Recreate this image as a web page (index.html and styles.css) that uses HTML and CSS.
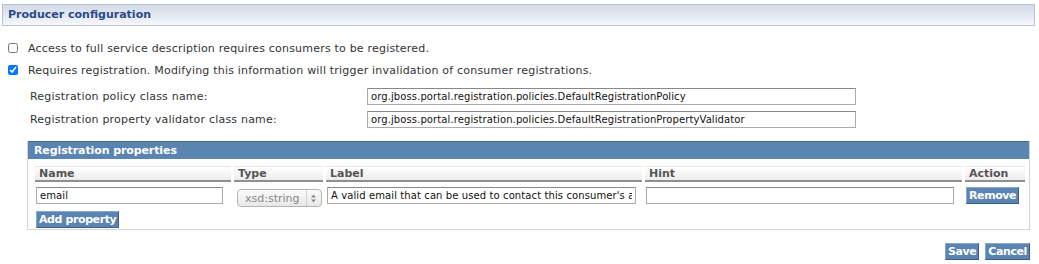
FILE: index.html
```html
<!DOCTYPE html>
<html lang="en">
<head>
    <meta charset="UTF-8">
    <title>Producer configuration</title>
    <link rel="stylesheet" href="styles.css">
</head>
<body>
    <div class="section-title">Producer configuration</div>

    <div class="options">
        <label class="check-row">
            <input type="checkbox">
            <span>Access to full service description requires consumers to be registered.</span>
        </label>
        <label class="check-row">
            <input type="checkbox" checked>
            <span>Requires registration. Modifying this information will trigger invalidation of consumer registrations.</span>
        </label>
    </div>

    <div class="field-grid">
        <label for="policy">Registration policy class name:</label>
        <input type="text" id="policy" class="text-field" value="org.jboss.portal.registration.policies.DefaultRegistrationPolicy">
        <label for="validator">Registration property validator class name:</label>
        <input type="text" id="validator" class="text-field" value="org.jboss.portal.registration.policies.DefaultRegistrationPropertyValidator">
    </div>

    <div class="props-box">
        <div class="props-title">Registration properties</div>
        <table class="props-table">
            <thead>
                <tr>
                    <th class="col-name">Name</th>
                    <th class="col-type">Type</th>
                    <th class="col-label">Label</th>
                    <th class="col-hint">Hint</th>
                    <th class="col-action">Action</th>
                </tr>
            </thead>
            <tbody>
                <tr>
                    <td><input type="text" class="cell-input name-input" value="email"></td>
                    <td>
                        <div class="fake-select">
                            <span>xsd:string</span>
                            <span class="arrows">
                                <svg width="7" height="11" viewBox="0 0 7 11"><path d="M1 4.5 L3.5 1.5 L6 4.5 Z M1 6.5 L3.5 9.5 L6 6.5 Z" fill="#8a8a8a"/></svg>
                            </span>
                        </div>
                    </td>
                    <td><input type="text" class="cell-input label-input" value="A valid email that can be used to contact this consumer's administrator"></td>
                    <td><input type="text" class="cell-input hint-input" value=""></td>
                    <td><button class="btn">Remove</button></td>
                </tr>
            </tbody>
        </table>
        <div class="add-row">
            <button class="btn">Add property</button>
        </div>
    </div>

    <div class="actions">
        <button class="btn">Save</button>
        <button class="btn">Cancel</button>
    </div>
</body>
</html>
```

FILE: styles.css
```css
* {
    box-sizing: border-box;
}

body {
    margin: 0;
    padding: 4px 4px 0 2px;
    font-family: 'DejaVu Sans', Verdana, sans-serif;
    font-size: 11px;
    letter-spacing: 0.2px;
    color: #333;
    background: white;
}

.section-title {
    height: 22px;
    line-height: 20px;
    padding-left: 5px;
    border: 1px solid #b5c4d8;
    background: linear-gradient(#d2dae8, #f5f7fb);
    color: #2c4a88;
    font-weight: bold;
    font-size: 11px;
    letter-spacing: 0;
}

.options {
    padding: 11px 0 0 6px;
}

.check-row {
    display: flex;
    align-items: center;
    height: 22px;
}

.check-row input {
    margin: 0 10px 0 0;
    width: 10px;
    height: 10px;
}

.field-grid {
    display: grid;
    grid-template-columns: 337px 489px;
    row-gap: 6px;
    align-items: center;
    padding: 7px 0 0 28px;
}

.field-grid label {
    color: #333;
}

.text-field {
    height: 17px;
    padding: 0 3px;
    border: 1px solid #aaa;
    border-top-color: #888;
    font-family: inherit;
    font-size: 10px;
    letter-spacing: 0.1px;
    color: #111;
}

.props-box {
    margin: 13px 5px 0 25px;
    border: 1px solid #d4d4d4;
    border-top: none;
    padding-bottom: 1px;
}

.props-title {
    height: 18px;
    line-height: 18px;
    padding-left: 6px;
    background: #5a84b1;
    border-top: 1px solid #47668e;
    color: white;
    font-weight: bold;
    letter-spacing: -0.1px;
}

.props-table {
    border-collapse: separate;
    border-spacing: 3px 0;
    margin: 7px 0 0 4px;
    width: 996px;
}

.props-table th {
    height: 16px;
    padding: 0 4px;
    text-align: left;
    font-weight: bold;
    color: #555;
    letter-spacing: 0;
    border-top: 1px solid #e6e6e6;
    border-bottom: 2px solid #8f8f8f;
    background: linear-gradient(#ffffff, #ececec);
}

.col-name { width: 196px; }
.col-type { width: 89px; }
.col-label { width: 316px; }
.col-hint { width: 317px; }

.props-table td {
    padding: 5px 0 0 1px;
    vertical-align: top;
}

.cell-input {
    height: 17px;
    padding: 0 3px;
    border: 1px solid #aaa;
    border-top-color: #888;
    font-family: inherit;
    font-size: 10px;
    letter-spacing: 0.1px;
    color: #111;
}

.name-input { width: 187px; }
.label-input { width: 309px; }
.hint-input { width: 308px; }

.fake-select {
    display: flex;
    align-items: center;
    justify-content: space-between;
    width: 85px;
    height: 18px;
    margin: 2px 0 0 2px;
    padding: 0 4px 0 7px;
    border: 1px solid #b4b4b4;
    border-radius: 4px;
    background: linear-gradient(#fbfbfb, #e8e8e8);
    color: #888;
    letter-spacing: 0;
}

.arrows {
    display: flex;
    align-items: center;
    height: 100%;
    padding-left: 3px;
    border-left: 1px solid #d0d0d0;
}

.btn {
    height: 17px;
    padding: 0 2px;
    border: 1px solid #3c5c85;
    border-top-color: #8aa6c8;
    border-left-color: #8aa6c8;
    background: #5a84b1;
    color: white;
    font-family: inherit;
    font-size: 11px;
    font-weight: bold;
    letter-spacing: -0.4px;
    cursor: pointer;
}

.add-row {
    padding: 4px 0 0 8px;
}

.actions {
    display: flex;
    justify-content: flex-end;
    gap: 6px;
    margin: 13px 5px 0 0;
}
```
